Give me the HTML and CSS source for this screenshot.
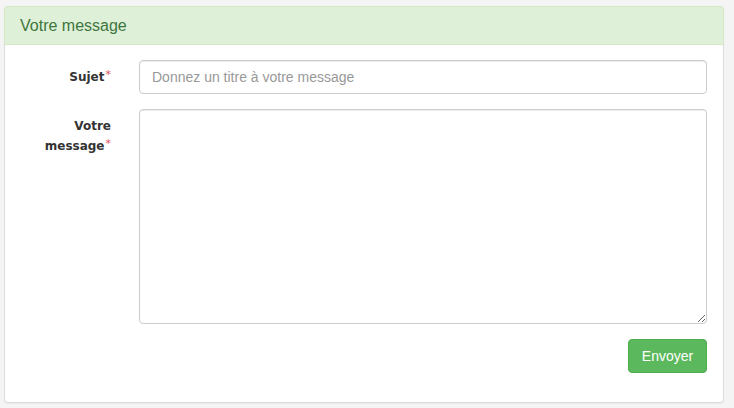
FILE: index.html
```html
<!DOCTYPE html>
<html lang="fr">
<head>
<meta charset="utf-8">
<title>Votre message</title>
<link rel="stylesheet" href="styles.css">
</head>
<body>
<div class="panel">
  <div class="panel-heading">Votre message</div>
  <form class="panel-body">
    <label class="label" for="sujet">Sujet<span class="req">*</span></label>
    <input class="input" id="sujet" type="text" placeholder="Donnez un titre à votre message">
    <label class="label" for="msg"><span class="line">Votre</span><span class="line">message<span class="req">*</span></span></label>
    <textarea class="textarea" id="msg"></textarea>
    <div class="actions"><button class="btn" type="button">Envoyer</button></div>
  </form>
</div>
</body>
</html>
```
FILE: styles.css
```css
html, body { margin: 0; padding: 0; }
body {
  background: #f4f4f4;
  font-family: "Liberation Sans", Arial, sans-serif;
  font-size: 14px;
  color: #333;
  padding: 6px 11px 5px 4px;
}
.panel {
  width: 720px;
  box-sizing: border-box;
  height: 397px;
  background: #fff;
  border: 1px solid #dcdcdc;
  border-radius: 4px;
  box-shadow: 0 1px 1px rgba(0,0,0,.05);
}
.panel-heading {
  box-sizing: border-box;
  height: 39px;
  margin: -1px -1px 0;
  padding: 10px 15px 0;
  background: #dff0d8;
  color: #3c763d;
  border: 1px solid #d6e9c6;
  border-radius: 4px 4px 0 0;
  font-size: 16px;
  line-height: 18px;
}
.panel-body {
  display: grid;
  grid-template-columns: 91px 1fr;
  column-gap: 28px;
  row-gap: 15px;
  padding: 15px 14px 0 15px;
  margin: 0;
}
.label {
  font-family: "DejaVu Sans", Verdana, sans-serif;
  font-weight: bold;
  font-size: 12px;
  line-height: 20px;
  padding-top: 7px;
  text-align: right;
  color: #333;
}
.line { display: block; }
.req {
  color: #e0505a;
  font-weight: normal;
  font-size: 11px;
  margin-left: 1px;
  vertical-align: top;
  line-height: 16px;
}
.input, .textarea {
  box-sizing: border-box;
  width: 568px;
  border: 1px solid #ccc;
  border-radius: 4px;
  box-shadow: inset 0 1px 1px rgba(0,0,0,.075);
  font-family: "Liberation Sans", Arial, sans-serif;
  font-size: 14px;
  color: #555;
  padding: 6px 12px;
  margin: 0;
  background: #fff;
}
.input { height: 34px; }
.input::placeholder { color: #999; }
.textarea { height: 215px; resize: both; display: block; }
.actions {
  grid-column: 2;
  display: flex;
  justify-content: flex-end;
  width: 568px;
}
.btn {
  box-sizing: border-box;
  height: 34px;
  width: 79px;
  padding: 6px 12px;
  background: #5cb85c;
  border: 1px solid #4cae4c;
  border-radius: 4px;
  color: #fff;
  font-family: "Liberation Sans", Arial, sans-serif;
  font-size: 14px;
  line-height: 20px;
}
```
